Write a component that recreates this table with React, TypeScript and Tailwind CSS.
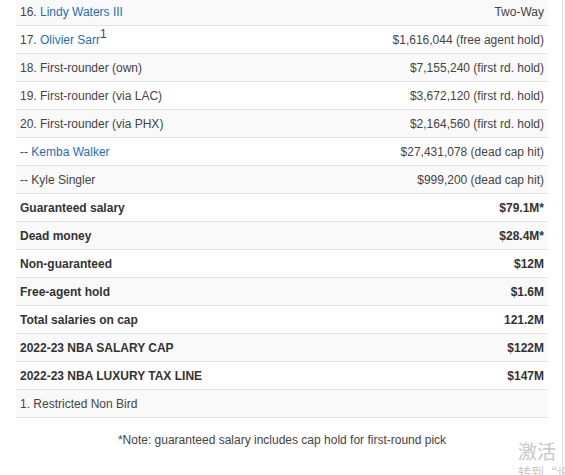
type Row = {
  label: React.ReactNode;
  value: string;
  bold?: boolean;
};

const link = "text-[#1f6fb8]";

const rows: Row[] = [
  { label: <>16. <span className={link}>Lindy Waters III</span></>, value: "Two-Way" },
  {
    label: (
      <>
        17. <span className={link}>Olivier Sarr</span>
        <sup className="text-[12px]">1</sup>
      </>
    ),
    value: "$1,616,044 (free agent hold)",
  },
  { label: "18. First-rounder (own)", value: "$7,155,240 (first rd. hold)" },
  { label: "19. First-rounder (via LAC)", value: "$3,672,120 (first rd. hold)" },
  { label: "20. First-rounder (via PHX)", value: "$2,164,560 (first rd. hold)" },
  { label: <>-- <span className={link}>Kemba Walker</span></>, value: "$27,431,078 (dead cap hit)" },
  { label: "-- Kyle Singler", value: "$999,200 (dead cap hit)" },
  { label: "Guaranteed salary", value: "$79.1M*", bold: true },
  { label: "Dead money", value: "$28.4M*", bold: true },
  { label: "Non-guaranteed", value: "$12M", bold: true },
  { label: "Free-agent hold", value: "$1.6M", bold: true },
  { label: "Total salaries on cap", value: "121.2M", bold: true },
  { label: "2022-23 NBA SALARY CAP", value: "$122M", bold: true },
  { label: "2022-23 NBA LUXURY TAX LINE", value: "$147M", bold: true },
  { label: "1. Restricted Non Bird", value: "" },
];

export default function App() {
  return (
    <div className="relative h-[475px] w-[565px] overflow-hidden bg-white font-['Liberation_Sans',Arial,sans-serif] text-[12px] text-[#444]">
      <div className="flex h-full">
        <div className="w-[563px] border-r border-[#dcdcdc]">
          <div className="ml-[16px] mt-[-2px] w-[532px]">
            {rows.map((r, i) => (
              <div
                key={i}
                className={`flex h-[28px] items-center justify-between border-b border-[#e3e3e3] px-[4px] ${
                  i % 2 === 0 ? "bg-[#f9f9f9]" : "bg-white"
                } ${r.bold ? "font-bold text-[#333]" : ""}`}
              >
                <span>{r.label}</span>
                <span>{r.value}</span>
              </div>
            ))}
            <p className="mt-[13px] text-center leading-[18px] text-[#444]">
              *Note: guaranteed salary includes cap hold for first-round pick
            </p>
          </div>
        </div>
      </div>
      <div className="absolute left-[518px] top-[438px] whitespace-nowrap font-['Noto_Sans_CJK_SC',sans-serif] text-[#c8c8c8]">
        <div className="text-[19px] leading-[26px]">激活</div>
        <div className="text-[13px] leading-[16px]">转到“设</div>
      </div>
    </div>
  );
}
